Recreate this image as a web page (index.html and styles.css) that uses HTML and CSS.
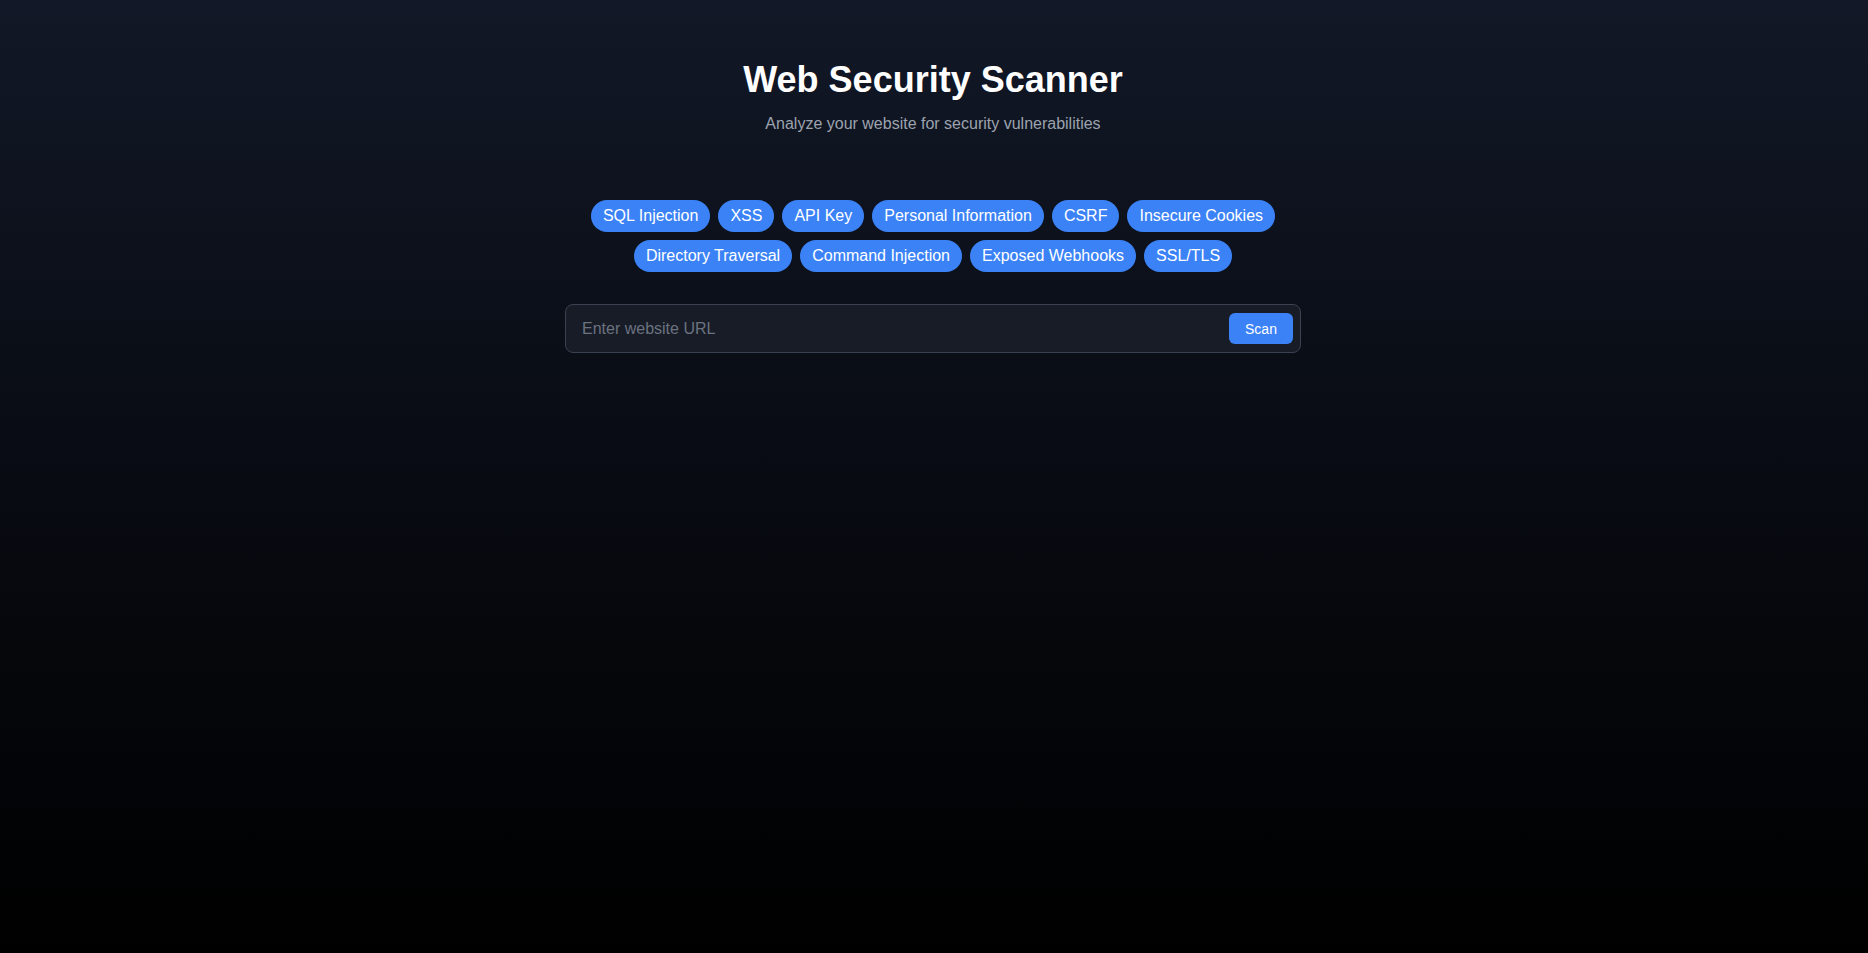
FILE: index.html
```html
<!DOCTYPE html>
<html lang="en">
<head>
    <meta charset="UTF-8">
    <meta name="viewport" content="width=device-width, initial-scale=1.0">
    <title>Web Security Scanner</title>
    <link rel="stylesheet" href="styles.css">
</head>
<body>
    <div class="container">
        <header class="header">
            <h1>Web Security Scanner</h1>
            <p class="subtitle">Analyze your website for security vulnerabilities</p>
        </header>
        <div class="tags">
            <span class="tag">SQL Injection</span>
            <span class="tag">XSS</span>
            <span class="tag">API Key</span>
            <span class="tag">Personal Information</span>
            <span class="tag">CSRF</span>
            <span class="tag">Insecure Cookies</span>
            <span class="tag">Directory Traversal</span>
            <span class="tag">Command Injection</span>
            <span class="tag">Exposed Webhooks</span>
            <span class="tag">SSL/TLS</span>
        </div>
        <form class="scan-form" onsubmit="return false">
            <input type="text" class="url-input" placeholder="Enter website URL">
            <button type="submit" class="scan-btn">Scan</button>
        </form>
    </div>
</body>
</html>
```

FILE: styles.css
```css
html, body {
    height: 100%;
}
body {
    font-family: 'Liberation Sans', Arial, sans-serif;
    background: linear-gradient(180deg, #121827 0%, #080b12 50%, #000000 100%);
    color: #fff;
    margin: 0;
    padding: 0 2px 0 0;
}
.container {
    max-width: 736px;
    margin: 0 auto;
    padding-top: 60px;
}
.header {
    text-align: center;
}
h1 {
    margin: 0;
    font-size: 36px;
    line-height: 40px;
    font-weight: 700;
    color: #ffffff;
}
.subtitle {
    margin: 12px 0 0;
    font-size: 16px;
    line-height: 24px;
    color: #9ca3af;
}
.tags {
    display: flex;
    flex-wrap: wrap;
    justify-content: center;
    gap: 8px;
    margin-top: 64px;
    padding: 0 20px;
}
.tag {
    background-color: #3b82f6;
    color: #fff;
    font-size: 16px;
    line-height: 24px;
    padding: 4px 12px;
    border-radius: 9999px;
}
.scan-form {
    display: flex;
    align-items: center;
    margin-top: 32px;
    height: 49px;
    box-sizing: border-box;
    padding: 0 7px 0 16px;
    background-color: #171c26;
    border: 1px solid #3a4150;
    border-radius: 8px;
}
.url-input {
    flex: 1;
    background: transparent;
    border: none;
    outline: none;
    color: #fff;
    font-family: inherit;
    font-size: 16px;
    padding: 0;
}
.url-input::placeholder {
    color: #6b7280;
}
.scan-btn {
    width: 64px;
    height: 31px;
    background-color: #3b82f6;
    color: #fff;
    border: none;
    border-radius: 6px;
    font-family: inherit;
    font-size: 14px;
    cursor: pointer;
}
```
